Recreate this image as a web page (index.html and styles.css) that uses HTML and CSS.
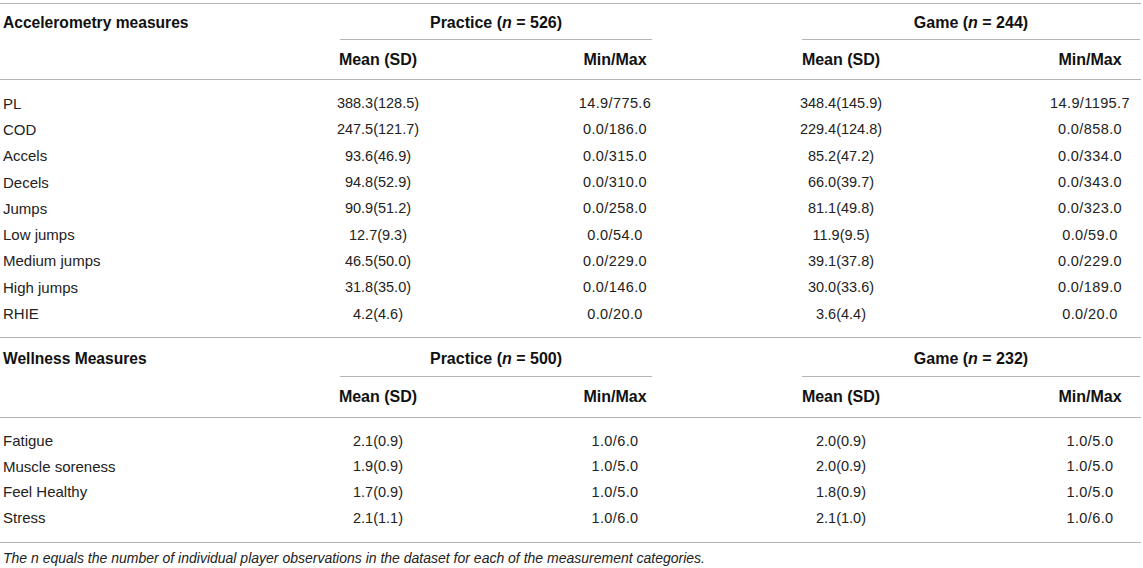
FILE: index.html
```html
<!DOCTYPE html>
<html lang="en">
<head>
  <meta charset="UTF-8" />
  <meta name="viewport" content="width=device-width, initial-scale=1.0"/>
  <title>Accelerometry and Wellness Measures</title>
  <link rel="stylesheet" href="styles.css">
</head>
<body>
  <div class="table">
    <div class="block">
      <div class="row head-top">
        <div class="label strong">Accelerometry measures</div>
        <div class="group practice">Practice (<i>n</i>&nbsp;=&nbsp;526)</div>
        <div class="group game">Game (<i>n</i>&nbsp;=&nbsp;244)</div>
      </div>
      <div class="row head-sub">
        <div class="m1">Mean (SD)</div>
        <div class="x1">Min/Max</div>
        <div class="m2">Mean (SD)</div>
        <div class="x2">Min/Max</div>
      </div>
      <div class="body">
        <div class="row"><div class="label">PL</div><div class="m1">388.3(128.5)</div><div class="x1">14.9/775.6</div><div class="m2">348.4(145.9)</div><div class="x2">14.9/1195.7</div></div>
        <div class="row"><div class="label">COD</div><div class="m1">247.5(121.7)</div><div class="x1">0.0/186.0</div><div class="m2">229.4(124.8)</div><div class="x2">0.0/858.0</div></div>
        <div class="row"><div class="label">Accels</div><div class="m1">93.6(46.9)</div><div class="x1">0.0/315.0</div><div class="m2">85.2(47.2)</div><div class="x2">0.0/334.0</div></div>
        <div class="row"><div class="label">Decels</div><div class="m1">94.8(52.9)</div><div class="x1">0.0/310.0</div><div class="m2">66.0(39.7)</div><div class="x2">0.0/343.0</div></div>
        <div class="row"><div class="label">Jumps</div><div class="m1">90.9(51.2)</div><div class="x1">0.0/258.0</div><div class="m2">81.1(49.8)</div><div class="x2">0.0/323.0</div></div>
        <div class="row"><div class="label">Low jumps</div><div class="m1">12.7(9.3)</div><div class="x1">0.0/54.0</div><div class="m2">11.9(9.5)</div><div class="x2">0.0/59.0</div></div>
        <div class="row"><div class="label">Medium jumps</div><div class="m1">46.5(50.0)</div><div class="x1">0.0/229.0</div><div class="m2">39.1(37.8)</div><div class="x2">0.0/229.0</div></div>
        <div class="row"><div class="label">High jumps</div><div class="m1">31.8(35.0)</div><div class="x1">0.0/146.0</div><div class="m2">30.0(33.6)</div><div class="x2">0.0/189.0</div></div>
        <div class="row"><div class="label">RHIE</div><div class="m1">4.2(4.6)</div><div class="x1">0.0/20.0</div><div class="m2">3.6(4.4)</div><div class="x2">0.0/20.0</div></div>
      </div>
    </div>

    <div class="block wellness">
      <div class="row head-top">
        <div class="label strong">Wellness Measures</div>
        <div class="group practice">Practice (<i>n</i>&nbsp;=&nbsp;500)</div>
        <div class="group game">Game (<i>n</i>&nbsp;=&nbsp;232)</div>
      </div>
      <div class="row head-sub">
        <div class="m1">Mean (SD)</div>
        <div class="x1">Min/Max</div>
        <div class="m2">Mean (SD)</div>
        <div class="x2">Min/Max</div>
      </div>
      <div class="body">
        <div class="row"><div class="label">Fatigue</div><div class="m1">2.1(0.9)</div><div class="x1">1.0/6.0</div><div class="m2">2.0(0.9)</div><div class="x2">1.0/5.0</div></div>
        <div class="row"><div class="label">Muscle soreness</div><div class="m1">1.9(0.9)</div><div class="x1">1.0/5.0</div><div class="m2">2.0(0.9)</div><div class="x2">1.0/5.0</div></div>
        <div class="row"><div class="label">Feel Healthy</div><div class="m1">1.7(0.9)</div><div class="x1">1.0/5.0</div><div class="m2">1.8(0.9)</div><div class="x2">1.0/5.0</div></div>
        <div class="row"><div class="label">Stress</div><div class="m1">2.1(1.1)</div><div class="x1">1.0/6.0</div><div class="m2">2.1(1.0)</div><div class="x2">1.0/6.0</div></div>
      </div>
    </div>

    <div class="caption">The n equals the number of individual player observations in the dataset for each of the measurement categories.</div>
  </div>
</body>
</html>
```

FILE: styles.css
```css
* {
  margin: 0;
  padding: 0;
  box-sizing: border-box;
}
body {
  background: #fff;
  color: #222;
  font-family: 'Liberation Sans', Arial, sans-serif;
  font-size: 14.5px;
  padding-top: 3px;
}
.table {
  width: 1141px;
}
.block {
  border-top: 1px solid #b4b4b4;
}
.row {
  display: grid;
  grid-template-columns: 328px 100px 137px 100px 126px 100px 149px 100px;
  align-items: center;
  height: 26.3px;
}
.label {
  grid-column: 1;
  padding-left: 3px;
  font-size: 15px;
  white-space: nowrap;
}
.m1, .x1, .m2, .x2 {
  text-align: center;
  white-space: nowrap;
}
.x1, .x2 {
  letter-spacing: 0.4px;
}
.m1 { grid-column: 2; }
.x1 { grid-column: 4; }
.m2 { grid-column: 6; }
.x2 { grid-column: 8; }
.group,
.head-sub div {
  font-weight: bold;
  color: #111;
  font-size: 16px;
  letter-spacing: 0;
}
.strong {
  font-weight: bold;
  color: #111;
  font-size: 15.6px;
}
.head-top {
  height: 36px;
  align-items: stretch;
}
.head-top .label {
  display: flex;
  align-items: center;
  padding-top: 2px;
}
.group {
  display: flex;
  align-items: center;
  justify-content: center;
  border-bottom: 1px solid #b4b4b4;
  padding-top: 2px;
  white-space: nowrap;
}
.practice {
  grid-column: 2 / 5;
  margin: 0 13px 0 12px;
}
.game {
  grid-column: 6 / 9;
  margin-left: 11px;
}
.head-sub {
  height: 40px;
  border-bottom: 1px solid #b4b4b4;
}
.body {
  padding: 10px 0 10px;
}
.wellness .head-top {
  height: 39px;
}
.wellness .head-top .label,
.wellness .group {
  padding-top: 4px;
}
.wellness .head-sub {
  height: 41px;
}
.wellness .body {
  padding: 10px 0 12px;
}
.wellness .body .row {
  height: 25.7px;
}
.caption {
  border-top: 1px solid #b4b4b4;
  font-style: italic;
  font-size: 14px;
  line-height: 16px;
  padding: 7px 0 0 3px;
  color: #222;
}
```
